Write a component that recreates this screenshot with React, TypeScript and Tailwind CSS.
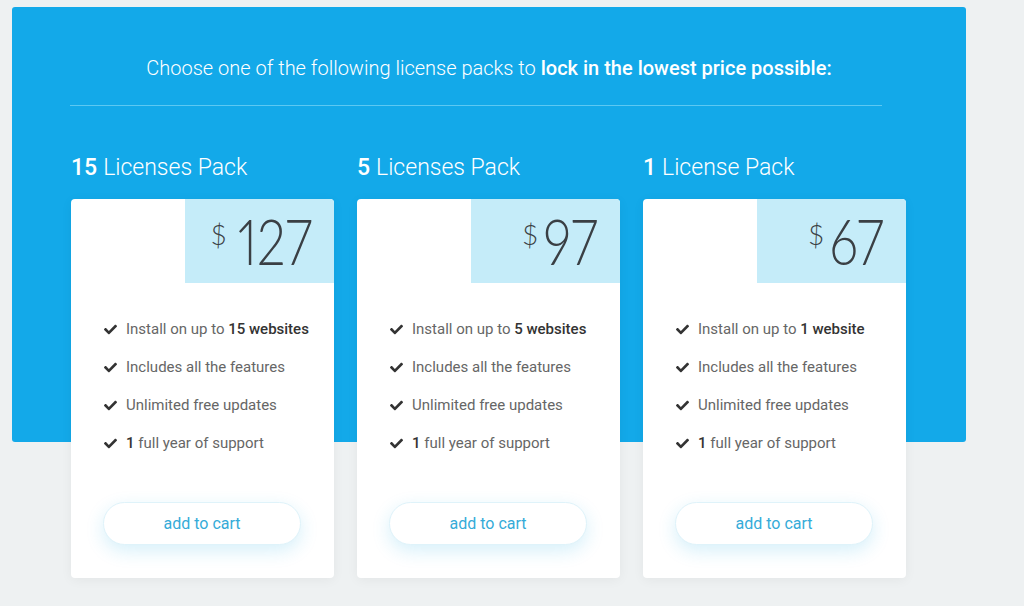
import React from "react";
import { FaCheck } from "react-icons/fa";

type Pack = {
  num: string;
  label: string;
  price: string;
  sites: string;
};

const packs: Pack[] = [
  { num: "15", label: "Licenses Pack", price: "127", sites: "15 websites" },
  { num: "5", label: "Licenses Pack", price: "97", sites: "5 websites" },
  { num: "1", label: "License Pack", price: "67", sites: "1 website" },
];

function Feature({ children }: { children: React.ReactNode }) {
  return (
    <li className="flex items-center h-[38px]">
      <FaCheck className="w-[13px] h-[13px] text-[#333] mr-[9px]" />
      <span className="text-[15px] text-[#666]">{children}</span>
    </li>
  );
}

function Card({ p }: { p: Pack }) {
  return (
    <div className="flex flex-col">
      <div className="h-[56px] shrink-0 flex items-center text-[23px] text-white leading-none pb-[7px]">
        <span className="font-medium">{p.num}</span>
        <span className="font-light ml-[6px]">{p.label}</span>
      </div>
      <div className="bg-white rounded-[4px] h-[379px] shrink-0 flex flex-col shadow-[0_2px_12px_rgba(0,0,0,0.05)]">
        <div className="flex justify-end">
          <div
            className="w-[149px] h-[84px] bg-[#c5ecf9] rounded-tr-[4px] flex justify-end items-start pr-[22px] pt-[10px] text-[#3a3f44]"
            style={{ fontFamily: "Lato, sans-serif" }}
          >
            <span className="text-[28px] font-light leading-none mt-[11px] mr-[-8px]">$</span>
            <span className="text-[64px] font-light leading-none tracking-[0px] proportional-nums scale-x-[0.8] origin-right inline-block">
              {p.price}
            </span>
          </div>
        </div>
        <ul className="pl-[33px] pt-[27px]">
          <Feature>
            Install on up to <span className="font-medium text-[#333]">{p.sites}</span>
          </Feature>
          <Feature>Includes all the features</Feature>
          <Feature>Unlimited free updates</Feature>
          <Feature>
            <span className="font-medium text-[#333]">1</span> full year of support
          </Feature>
        </ul>
        <div className="mt-auto pl-[32px] pb-[33px]">
          <button className="w-[198px] h-[43px] rounded-full bg-white border border-[#dff3fa] text-[16px] text-[#35abd8] shadow-[0_6px_18px_rgba(30,170,230,0.18)]">
            add to cart
          </button>
        </div>
      </div>
    </div>
  );
}

export default function App() {
  return (
    <div
      className="w-[1024px] h-[606px] bg-[#eef1f2] pt-[7px] pl-[12px] overflow-hidden"
      style={{ fontFamily: "Roboto, 'Liberation Sans', sans-serif" }}
    >
      <div className="w-[954px] h-[435px] bg-[#13a9e9] rounded-[3px] flex flex-col">
        <div className="h-[98px] shrink-0 flex items-end justify-center pb-[27px]">
          <p className="text-[20px] text-white font-light leading-none">
            Choose one of the following license packs to{" "}
            <span className="font-medium">lock in the lowest price possible:</span>
          </p>
        </div>
        <div className="h-px shrink-0 bg-[#5cc8f2] w-[812px] ml-[58px]" />
        <div className="grid grid-cols-[263px_263px_263px] gap-[23px] pt-[37px] pl-[59px] shrink-0">
          {packs.map((p) => (
            <Card key={p.price} p={p} />
          ))}
        </div>
      </div>
    </div>
  );
}
